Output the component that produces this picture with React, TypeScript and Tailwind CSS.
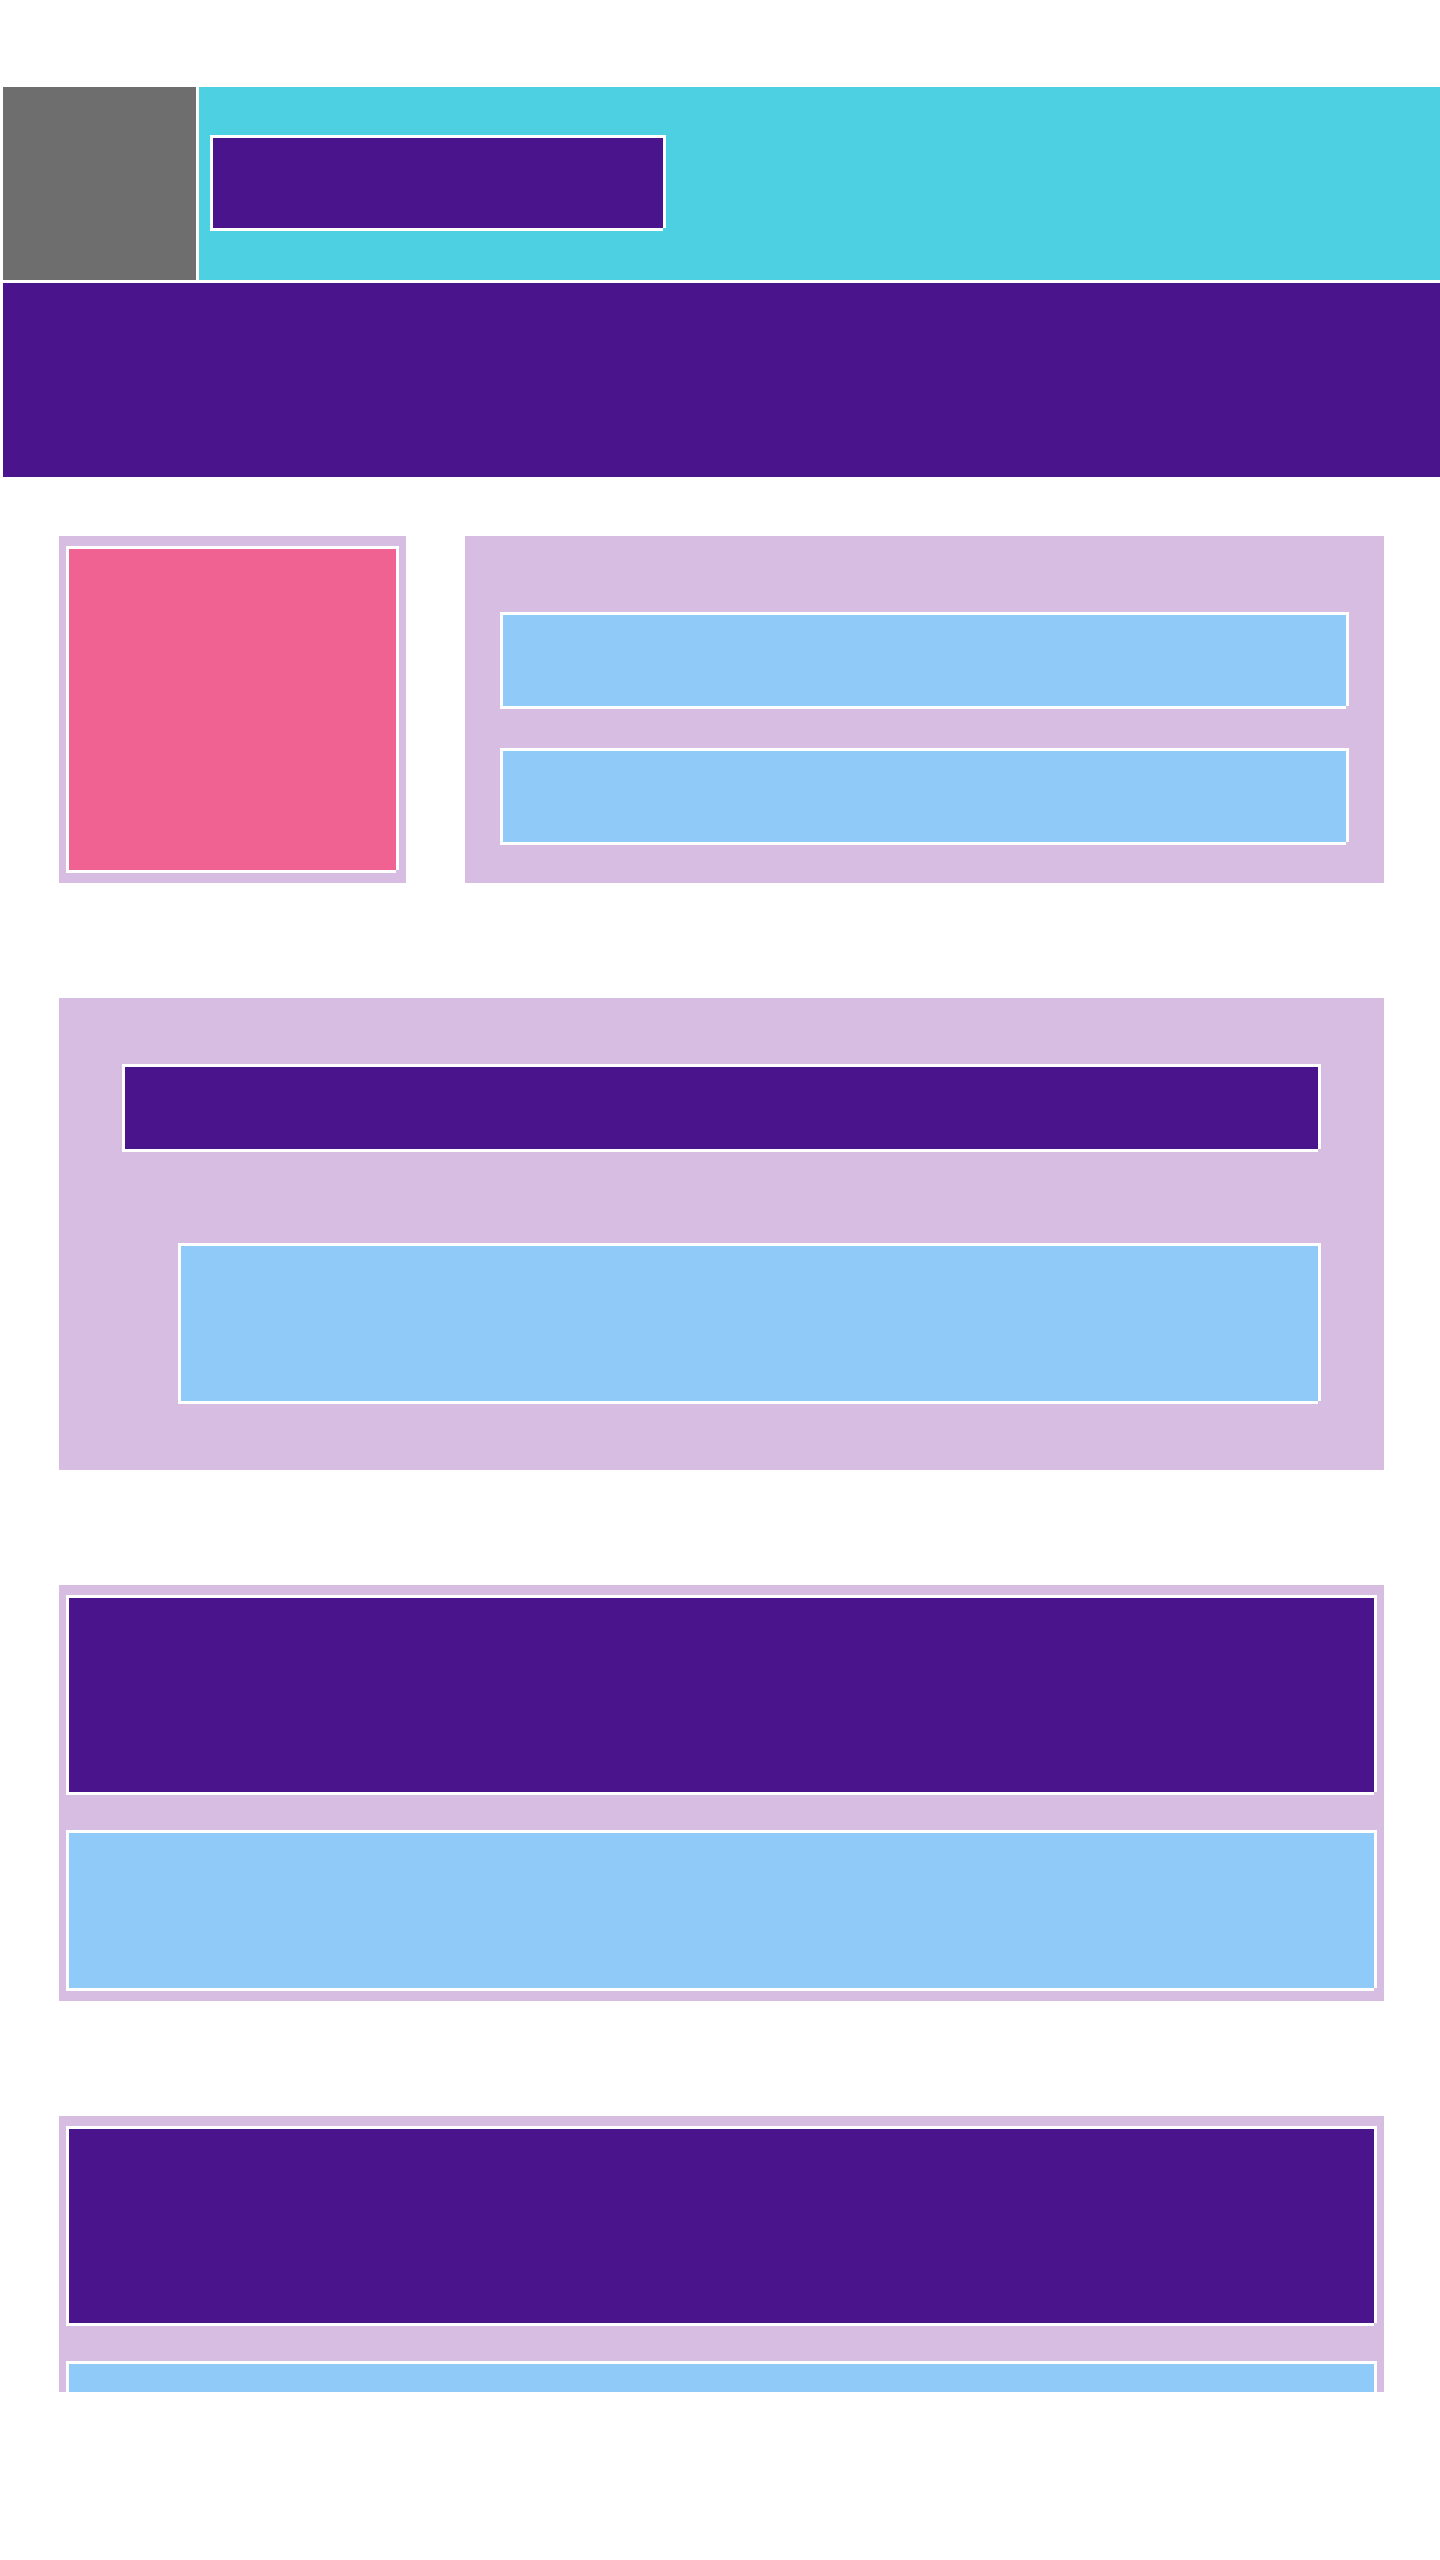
import clsx from "clsx";

const tones = {
  indigo: "bg-[#4a148c]",
  sky: "bg-[#90caf9]",
  pink: "bg-[#f06292]",
};

// Solid block with a 3px white outline that is notched at its bottom right corner.
function Block({ tone, className }: { tone: keyof typeof tones; className?: string }) {
  return (
    <div
      className={clsx(
        "shadow-[3px_-3px_#fff,3px_0_#fff,-3px_-3px_#fff,-3px_3px_#fff,0_3px_#fff]",
        tones[tone],
        className,
      )}
    />
  );
}

const card = "bg-[#d7bde2]";

export default function App() {
  return (
    <div className="min-h-screen bg-white pt-[87px]">
      <header className="flex flex-col gap-[3px] pl-[3px]">
        <div className="flex h-[193px] gap-[3px]">
          <div className="w-[193px] shrink-0 bg-[#6e6e6e]" />
          <div className="flex flex-1 items-start bg-[#4dd0e1] pt-[51px] pl-[14px]">
            <Block tone="indigo" className="h-[90px] w-[450px]" />
          </div>
        </div>
        <nav className="h-[194px] bg-[#4a148c]" />
      </header>

      <main className="flex flex-col gap-[115px] pt-[59px] pr-14 pl-[59px]">
        <div className="flex gap-[59px]">
          <section className={clsx(card, "w-[347px] shrink-0 px-[10px] py-[13px]")}>
            <Block tone="pink" className="h-[321px]" />
          </section>
          <section className={clsx(card, "flex flex-1 flex-col gap-[45px] px-[38px] pt-[79px] pb-[41px]")}>
            <Block tone="sky" className="h-[91px]" />
            <Block tone="sky" className="h-[91px]" />
          </section>
        </div>

        <section className={clsx(card, "flex flex-col gap-[97px] px-[66px] py-[69px]")}>
          <Block tone="indigo" className="h-[82px]" />
          <Block tone="sky" className="ml-14 h-[155px]" />
        </section>

        <section className={clsx(card, "flex flex-col gap-[41px] px-[10px] py-[13px]")}>
          <Block tone="indigo" className="h-[194px]" />
          <Block tone="sky" className="h-[155px]" />
        </section>

        <section className={clsx(card, "flex flex-col gap-[41px] overflow-hidden px-[10px] pt-[13px]")}>
          <Block tone="indigo" className="h-[194px]" />
          <Block tone="sky" className="h-7" />
        </section>
      </main>
    </div>
  );
}
